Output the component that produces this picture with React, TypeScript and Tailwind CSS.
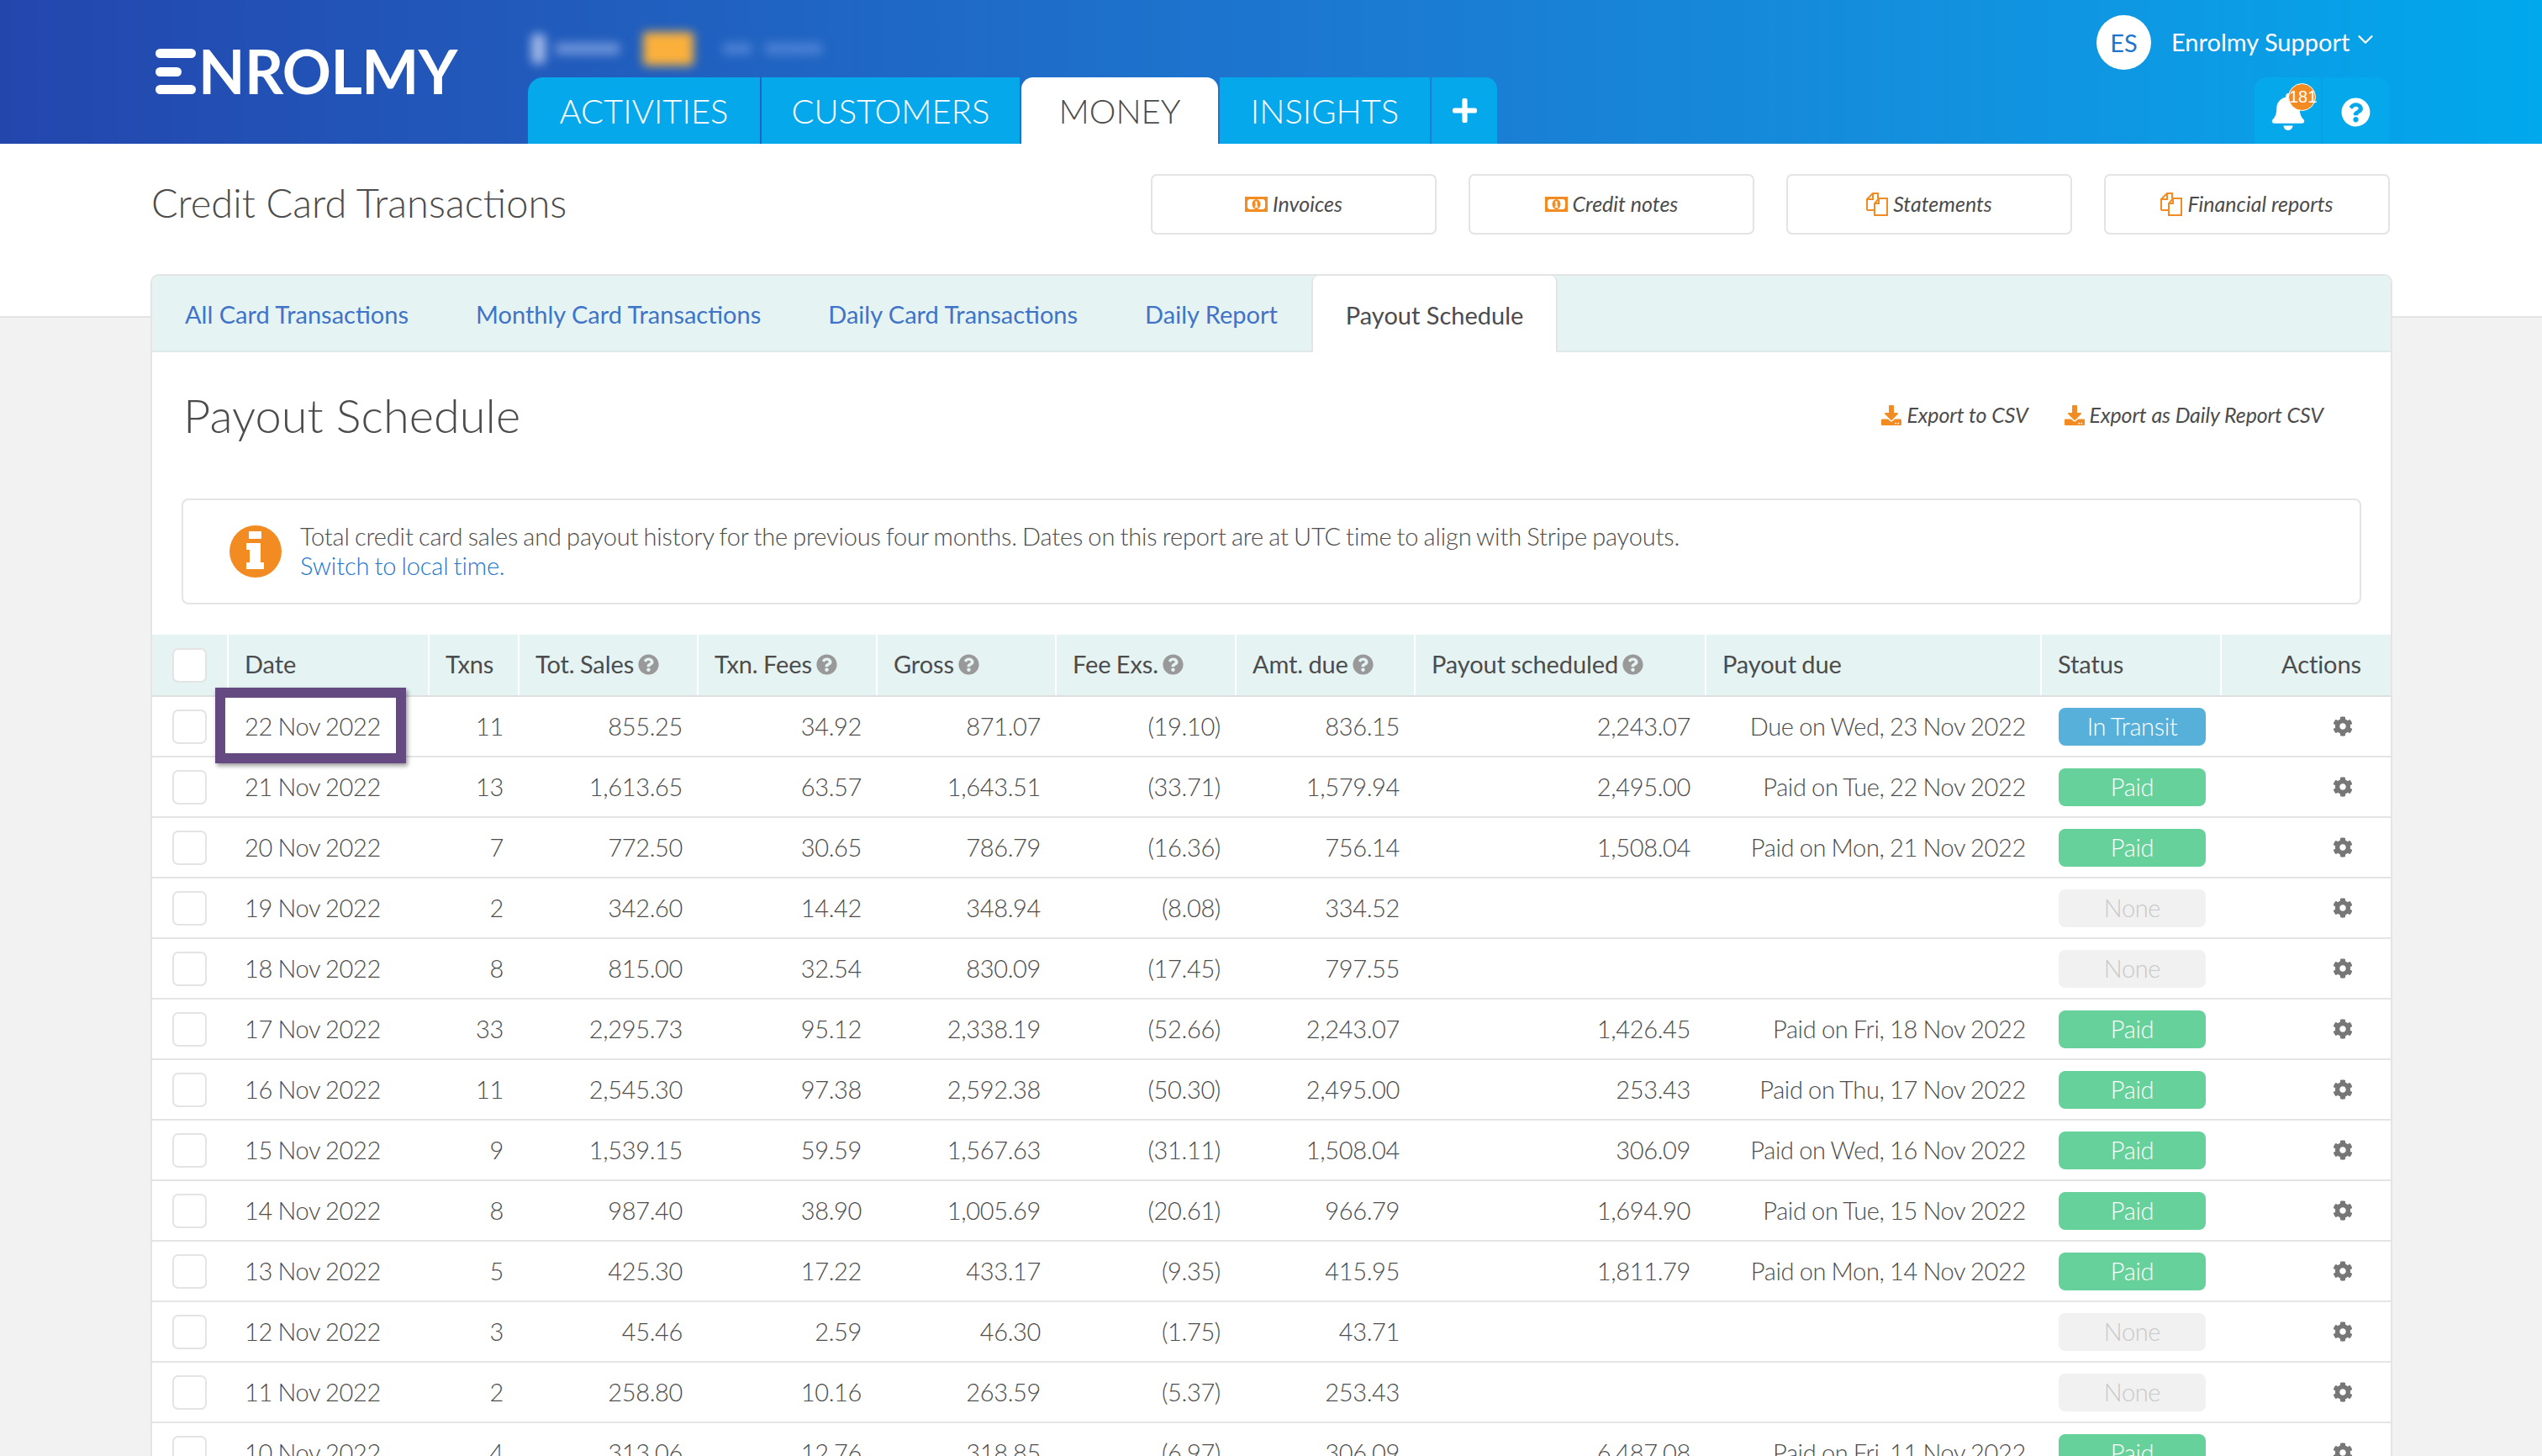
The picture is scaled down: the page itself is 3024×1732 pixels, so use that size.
import React from "react";
import { FaBell, FaQuestionCircle, FaCog, FaPlus, FaDownload } from "react-icons/fa";
import { ChevronDown } from "lucide-react";

const cols = "grid grid-cols-[91px_239px_107px_213px_213px_213px_214px_213px_346px_399px_214px_202px]";

type Row = [string, string, string, string, string, string, string, string, string, string];
const rows: Row[] = [
  ["22 Nov 2022", "11", "855.25", "34.92", "871.07", "(19.10)", "836.15", "2,243.07", "Due on Wed, 23 Nov 2022", "In Transit"],
  ["21 Nov 2022", "13", "1,613.65", "63.57", "1,643.51", "(33.71)", "1,579.94", "2,495.00", "Paid on Tue, 22 Nov 2022", "Paid"],
  ["20 Nov 2022", "7", "772.50", "30.65", "786.79", "(16.36)", "756.14", "1,508.04", "Paid on Mon, 21 Nov 2022", "Paid"],
  ["19 Nov 2022", "2", "342.60", "14.42", "348.94", "(8.08)", "334.52", "", "", "None"],
  ["18 Nov 2022", "8", "815.00", "32.54", "830.09", "(17.45)", "797.55", "", "", "None"],
  ["17 Nov 2022", "33", "2,295.73", "95.12", "2,338.19", "(52.66)", "2,243.07", "1,426.45", "Paid on Fri, 18 Nov 2022", "Paid"],
  ["16 Nov 2022", "11", "2,545.30", "97.38", "2,592.38", "(50.30)", "2,495.00", "253.43", "Paid on Thu, 17 Nov 2022", "Paid"],
  ["15 Nov 2022", "9", "1,539.15", "59.59", "1,567.63", "(31.11)", "1,508.04", "306.09", "Paid on Wed, 16 Nov 2022", "Paid"],
  ["14 Nov 2022", "8", "987.40", "38.90", "1,005.69", "(20.61)", "966.79", "1,694.90", "Paid on Tue, 15 Nov 2022", "Paid"],
  ["13 Nov 2022", "5", "425.30", "17.22", "433.17", "(9.35)", "415.95", "1,811.79", "Paid on Mon, 14 Nov 2022", "Paid"],
  ["12 Nov 2022", "3", "45.46", "2.59", "46.30", "(1.75)", "43.71", "", "", "None"],
  ["11 Nov 2022", "2", "258.80", "10.16", "263.59", "(5.37)", "253.43", "", "", "None"],
  ["10 Nov 2022", "4", "313.06", "12.76", "318.85", "(6.97)", "306.09", "6,487.08", "Paid on Fri, 11 Nov 2022", "Paid"],
];

function Check() {
  return <span className="block w-[41px] h-[41px] rounded-[7px] border-2 border-[#e4e4e4] bg-white" />;
}

function Head({ label, help, right }: { label: string; help?: boolean; right?: boolean }) {
  return (
    <div className={`h-full flex items-center gap-[5px] px-[19px] pb-[2px] border-r-2 border-white last:border-r-0 tracking-[-0.1px] [word-spacing:-1px] ${right ? "justify-end pr-[36px]" : ""}`}>
      <span>{label}</span>
      {help && <FaQuestionCircle className="text-[#999] w-[25px] h-[25px] shrink-0" />}
    </div>
  );
}

function Badge({ s }: { s: string }) {
  const tone =
    s === "Paid" ? "bg-[#66d19a] text-white" : s === "None" ? "bg-[#f1f1f1] text-[#c8c8c8]" : "bg-[#56b0d9] text-white";
  return <span className={`flex w-[175px] h-[45px] items-center justify-center rounded-[8px] ${tone}`}>{s}</span>;
}

function Num({ v }: { v: string }) {
  return <div className="flex items-center justify-end pr-[19px]">{v}</div>;
}

function TopButton({ label, icon }: { label: string; icon: React.ReactNode }) {
  return (
    <a className="flex w-[340px] h-[72px] items-center justify-center gap-[6px] rounded-[7px] border-2 border-[#e4e4e4] bg-white italic text-[25px] text-[#4c4c4c]">
      {icon}
      <span>{label}</span>
    </a>
  );
}

function Money() {
  return (
    <svg viewBox="0 0 27 18" className="w-[27px] h-[18px]">
      <rect width="27" height="18" fill="#f28c22" />
      <path d="M5 3H22L24 5V13L22 15H5L3 13V5Z" fill="#fff" />
      <ellipse cx="13.5" cy="9" rx="5" ry="6" fill="#f28c22" />
      <path d="M12 5.5H14.6V11.5H15.6V13H11.6V11.5H12.6V7.2H12Z" fill="#fff" />
    </svg>
  );
}

function Files() {
  return (
    <svg viewBox="0 0 26 28" className="w-[26px] h-[28px]" fill="none" stroke="#f28c22" strokeWidth="2">
      <path d="M1 21V8L8 1H14V7M1 21H9M8 1V8H1" />
      <path d="M10 27V13L15 7H25V27ZM15 7V13H10" fill="#fff" />
    </svg>
  );
}

function InfoIcon() {
  return (
    <svg viewBox="0 0 62 62" className="w-[62px] h-[62px] shrink-0">
      <circle cx="31" cy="31" r="31" fill="#f28c22" />
      <path d="M24 7H37Q38 7 38 8V15Q38 16 37 16H24Q23 16 23 15V8Q23 7 24 7ZM20 21H37V44H41V52H20V44H24V29H20Z" fill="#fff" />
    </svg>
  );
}

function Tab({ w, active, children }: { w: string; active?: boolean; children: React.ReactNode }) {
  return (
    <div className={`${w} h-[79px] flex items-center justify-center ${active ? "bg-white text-[#4c4c4c] rounded-t-[14px]" : "bg-[#06a8ec] text-white"}`}>
      {children}
    </div>
  );
}

export default function App() {
  return (
    <div className="w-[3024px] h-[1732px] overflow-hidden bg-[#f2f2f2] font-[Lato,sans-serif] text-[#4c4c4c]">
      <header className="h-[171px] flex bg-linear-to-r from-[#2346ad] via-[#1c76cf] to-[#00a8ec]">
        <div className="w-[628px] pl-[185px] pt-[58px] flex items-start">
          <div className="flex items-start h-[56px]">
            <div className="flex flex-col justify-between w-[50px] h-[54px]">
              <span className="block w-[48px] h-[11px] rounded-full bg-white" />
              <span className="block w-[31px] h-[11px] rounded-full bg-white" />
              <span className="block w-[48px] h-[11px] rounded-full bg-white" />
            </div>
            <span className="ml-[1px] -mt-[2px] text-[72px] leading-[56px] font-bold text-white tracking-[-0.6px]">NROLMY</span>
          </div>
        </div>
        <div className="flex-1 flex flex-col justify-end relative">
          <div className="flex items-center h-[92px] pt-[24px] pl-[4px] blur-[6px]">
            <span className="w-[17px] h-[36px] bg-[#9db5e6] rounded-[6px]" />
            <span className="ml-[12px] w-[76px] h-[14px] bg-[#6d92d8]" />
            <span className="ml-[28px] w-[60px] h-[40px] bg-[#fbb03b] rounded-[4px]" />
            <span className="ml-[35px] w-[34px] h-[14px] bg-[#4a80d4]" />
            <span className="ml-[16px] w-[68px] h-[14px] bg-[#4a80d4]" />
          </div>
          <nav className="flex gap-[2px] text-[40px] font-light">
            <Tab w="w-[276px] rounded-tl-[18px]">ACTIVITIES</Tab>
            <Tab w="w-[307px]">CUSTOMERS</Tab>
            <Tab w="w-[234px]" active>MONEY</Tab>
            <Tab w="w-[250px]">INSIGHTS</Tab>
            <Tab w="w-[78px] rounded-tr-[14px]"><FaPlus className="w-[33px] h-[33px] text-white" /></Tab>
          </nav>
        </div>
        <div className="w-[530px] flex flex-col">
          <div className="h-[92px] flex items-start pt-[18px] text-white text-[29px]">
            <span className="flex w-[65px] h-[65px] items-center justify-center rounded-full bg-white text-[#1c76cf]">ES</span>
            <span className="ml-[24px] mt-[10px]">Enrolmy Support</span>
            <ChevronDown className="ml-[4px] mt-[14px] w-[30px] h-[30px]" strokeWidth={1.8} />
          </div>
          <div className="flex gap-[2px] pl-[188px] text-white">
            <div className="relative w-[79px] h-[79px] bg-[#06a8ec] rounded-tl-[14px] flex items-center justify-center">
              <FaBell className="w-[42px] h-[44px] mt-[2px]" />
              <span className="absolute left-[40px] top-[7px] w-[33px] h-[33px] rounded-full bg-[#f28c22] border border-white text-[20px] leading-[31px] font-['Liberation_Sans',sans-serif] whitespace-nowrap">
                181
              </span>
            </div>
            <div className="w-[79px] h-[79px] bg-[#06a8ec] rounded-tr-[14px] flex items-center justify-center">
              <FaQuestionCircle className="w-[35px] h-[35px] mt-[4px]" />
            </div>
          </div>
        </div>
      </header>

      <section className="h-[207px] bg-white border-b-2 border-[#e4e4e4] flex items-start pl-[180px] pt-[36px]">
        <h1 className="w-[1189px] -mt-[2px] text-[47px] font-light leading-[72px]">Credit Card Transactions</h1>
        <div className="flex gap-[38px]">
          <TopButton label="Invoices" icon={<Money />} />
          <TopButton label="Credit notes" icon={<Money />} />
          <TopButton label="Statements" icon={<Files />} />
          <TopButton label="Financial reports" icon={<Files />} />
        </div>
      </section>

      <main className="relative -mt-[52px] ml-[179px] w-[2667px] bg-white border-2 border-[#e4e4e4] rounded-t-[10px] text-[29px]">
        <div className="h-[91px] flex bg-[#e5f3f3] border-b-2 border-[#dfe9e9] rounded-t-[8px] text-[#3f74c8]">
          <a className="flex items-center pl-[39px] pr-[40px] pt-[2px]">All Card Transactions</a>
          <a className="flex items-center px-[40px] pt-[2px]">Monthly Card Transactions</a>
          <a className="flex items-center px-[40px] pt-[2px]">Daily Card Transactions</a>
          <a className="flex items-center px-[40px] pt-[2px]">Daily Report</a>
          <a className="flex items-center px-[39px] h-[91px] bg-white text-[#4c4c4c] border-x-2 border-[#e4e4e4] rounded-t-[8px] pt-[2px]">Payout Schedule</a>
        </div>

        <div className="h-[174px] flex justify-between items-start pl-[37px] pr-[80px] pt-[35px]">
          <h2 className="text-[56px] font-light leading-[80px]">Payout Schedule</h2>
          <div className="flex gap-[43px] pt-[21px] italic text-[25px] tracking-[-0.1px]">
            <a className="flex items-center gap-[6px]"><FaDownload className="w-[24px] h-[24px] text-[#f28c22]" />Export to CSV</a>
            <a className="flex items-center gap-[6px]"><FaDownload className="w-[24px] h-[24px] text-[#f28c22]" />Export as Daily Report CSV</a>
          </div>
        </div>

        <div className="mx-[35px] h-[126px] flex items-center gap-[22px] rounded-[8px] border-2 border-[#e4e4e4] pl-[55px] font-light leading-[35px] tracking-[-0.15px] [word-spacing:-1.5px]">
          <InfoIcon />
          <p className="-mt-[3px]">
            Total credit card sales and payout history for the previous four months. Dates on this report are at UTC time to align with Stripe payouts.
            <br />
            <a className="text-[#1c76cf]">Switch to local time.</a>
          </p>
        </div>

        <div className="mt-[36px]">
          <div className={`${cols} h-[74px] bg-[#e5f3f3] border-b-2 border-[#dfdfdf]`}>
            <div className="h-full flex items-center pl-[24px] border-r-2 border-white"><Check /></div>
            <Head label="Date" />
            <Head label="Txns" />
            <Head label="Tot. Sales" help />
            <Head label="Txn. Fees" help />
            <Head label="Gross" help />
            <Head label="Fee Exs." help />
            <Head label="Amt. due" help />
            <Head label="Payout scheduled" help />
            <Head label="Payout due" />
            <Head label="Status" />
            <Head label="Actions" right />
          </div>
          {rows.map((r, i) => (
            <div key={r[0]} className={`${cols} h-[72px] border-b-2 border-[#e4e4e4] font-light tracking-[-0.35px] [word-spacing:-1px]`}>
              <div className="flex items-center pl-[24px]"><Check /></div>
              <div className="relative flex items-center pl-[19px]">
                {r[0]}
                {i === 0 && (
                  <span className="absolute -left-[16px] -top-[11px] w-[227px] h-[90px] border-[12px] border-[#654a82] shadow-[2px_3px_5px_rgba(0,0,0,0.4)] z-10" />
                )}
              </div>
              <Num v={r[1]} />
              <Num v={r[2]} />
              <Num v={r[3]} />
              <Num v={r[4]} />
              <Num v={r[5]} />
              <Num v={r[6]} />
              <Num v={r[7]} />
              <Num v={r[8]} />
              <div className="flex items-center pl-[20px]"><Badge s={r[9]} /></div>
              <div className="flex items-center justify-end pr-[46px]"><FaCog className="w-[24px] h-[24px] text-[#777]" /></div>
            </div>
          ))}
        </div>
      </main>
    </div>
  );
}
